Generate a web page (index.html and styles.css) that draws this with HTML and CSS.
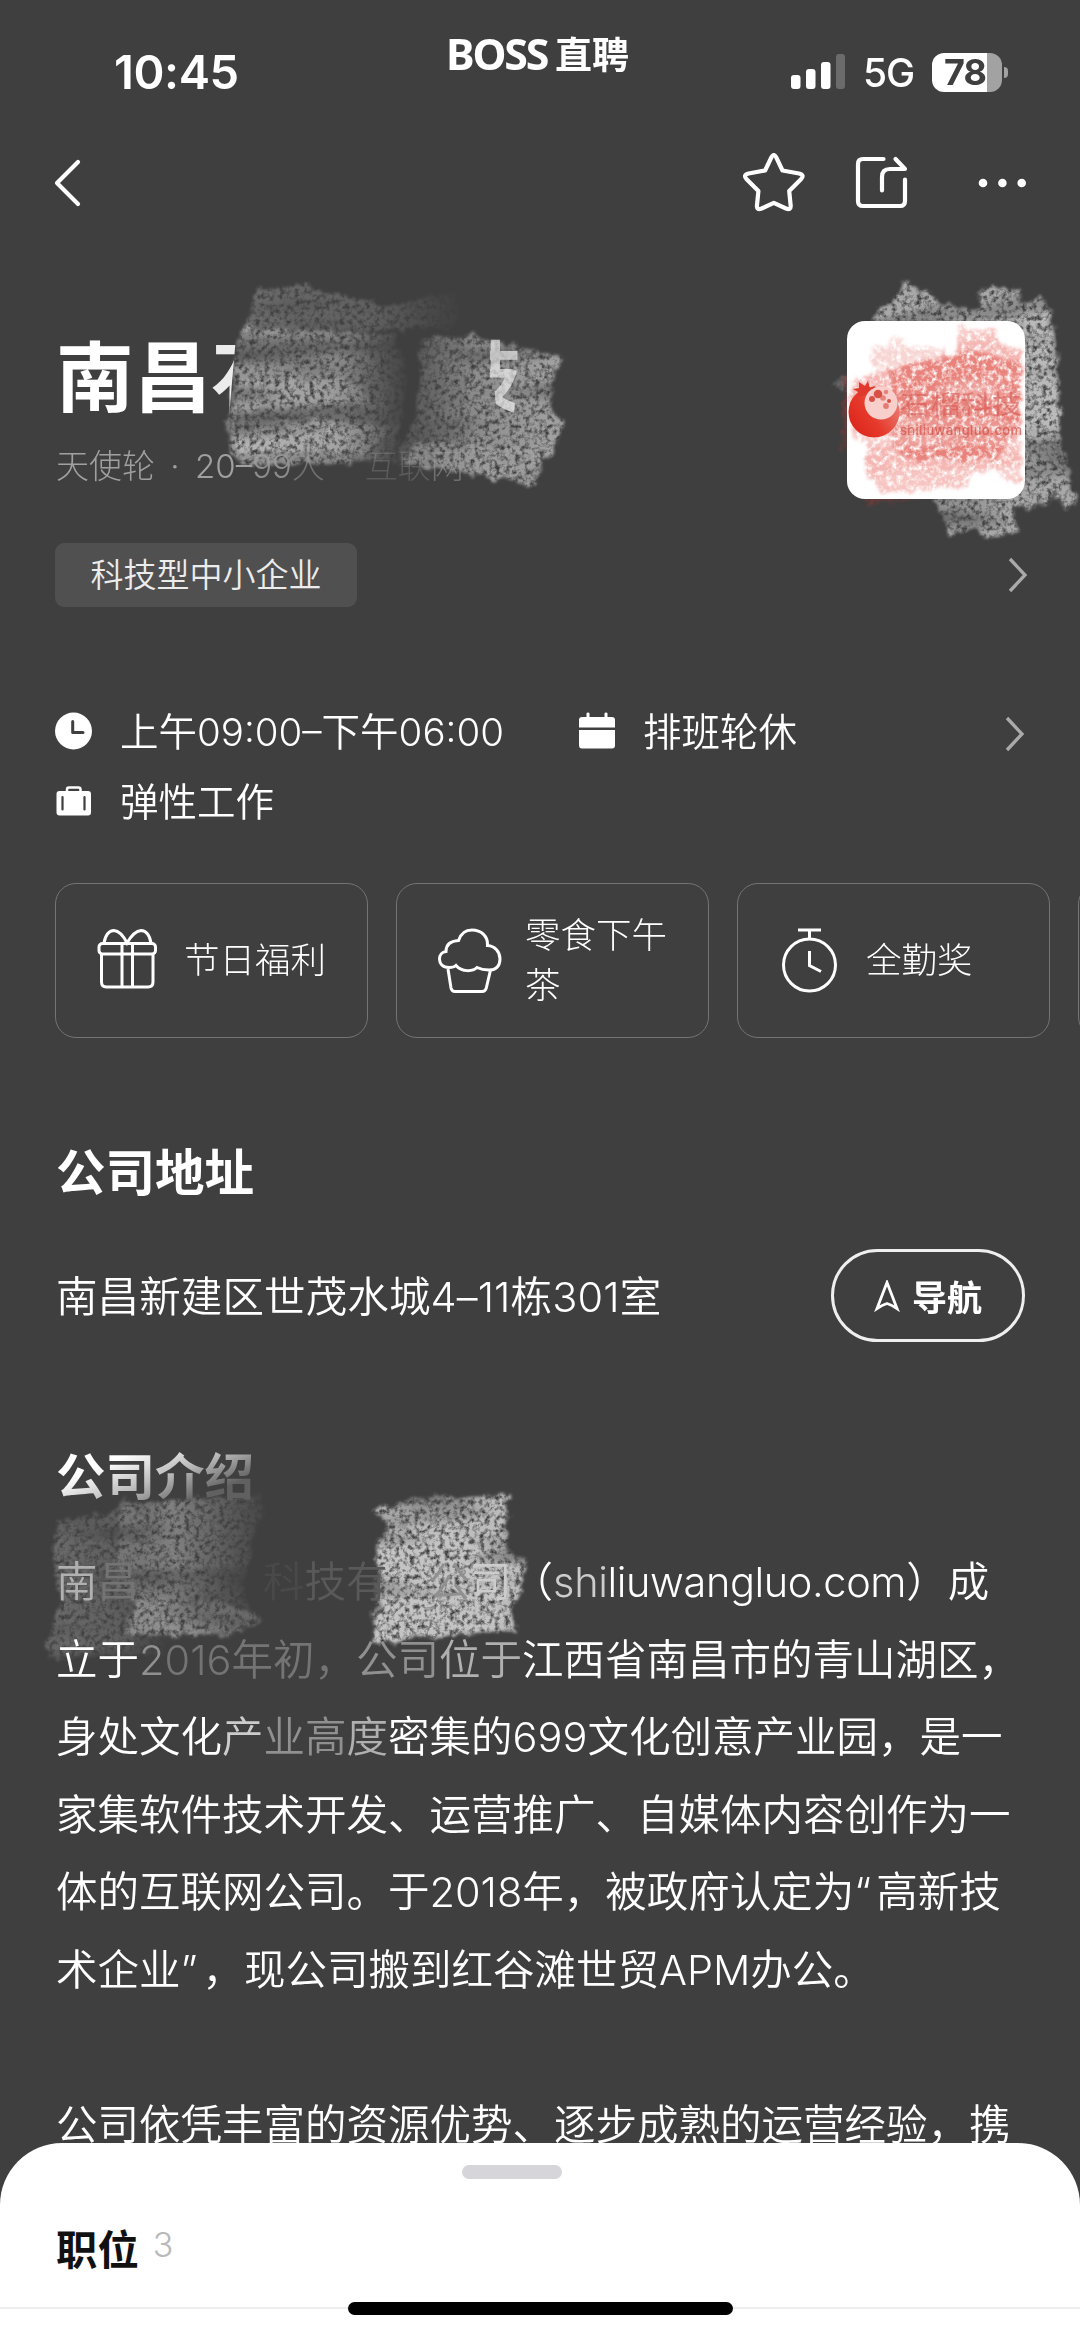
FILE: index.html
```html
<!DOCTYPE html>
<html lang="zh-CN">
<head>
<meta charset="utf-8">
<title>BOSS直聘 - 公司主页</title>
<link rel="stylesheet" href="styles.css">
</head>
<body>
<main class="screen">
  <svg class="smudges" width="1080" height="2337" viewBox="0 0 1080 2337" aria-hidden="true">
    <defs>
      <filter id="chalk" x="-5%" y="-5%" width="110%" height="110%" color-interpolation-filters="sRGB">
        <feTurbulence type="fractalNoise" baseFrequency="0.2" numOctaves="4" seed="4" result="n"/>
        <feColorMatrix in="n" type="matrix" values="0 0 0 0 1  0 0 0 0 1  0 0 0 0 1  2.6 0 0 0 -0.5" result="grain"/>
        <feTurbulence type="fractalNoise" baseFrequency="0.006 0.03" numOctaves="2" seed="9" result="wide"/>
        <feColorMatrix in="wide" type="matrix" values="0 0 0 0 1  0 0 0 0 1  0 0 0 0 1  2 0 0 0 0" result="bands"/>
        <feTurbulence type="fractalNoise" baseFrequency="0.09" numOctaves="3" seed="2" result="warp"/>
        <feDisplacementMap in="SourceGraphic" in2="warp" scale="13" xChannelSelector="R" yChannelSelector="G" result="edge"/>
        <feGaussianBlur in="edge" stdDeviation="1.4" result="soft"/>
        <feComposite in="soft" in2="grain" operator="in" result="a"/>
        <feComposite in="a" in2="bands" operator="in" result="b"/>
        <feGaussianBlur in="b" stdDeviation="0.6"/>
      </filter>
      <linearGradient id="fadeA" x1="0" x2="1"><stop offset="0" stop-color="#c4c4c4" stop-opacity=".9"/><stop offset=".65" stop-color="#b4b4b4" stop-opacity=".8"/><stop offset="1" stop-color="#888" stop-opacity=".1"/></linearGradient>
      <linearGradient id="fadeB" x1="0" x2="1"><stop offset="0" stop-color="#999" stop-opacity=".2"/><stop offset=".5" stop-color="#b4b4b4" stop-opacity=".8"/><stop offset="1" stop-color="#bbb" stop-opacity=".95"/></linearGradient>
      <linearGradient id="fadeC" x1="0" x2="1"><stop offset="0" stop-color="#999" stop-opacity=".5"/><stop offset=".6" stop-color="#999" stop-opacity=".35"/><stop offset="1" stop-color="#888" stop-opacity="0"/></linearGradient>
      <linearGradient id="fadeD" x1="0" x2="1"><stop offset="0" stop-color="#aaa" stop-opacity=".3"/><stop offset=".4" stop-color="#b0b0b0" stop-opacity=".65"/><stop offset="1" stop-color="#999" stop-opacity=".1"/></linearGradient>
    </defs>
    <g filter="url(#chalk)">
      <path fill="url(#fadeC)" d="M255 290 305 286 390 306 465 290 455 330 245 332Z"/>
      <path fill="url(#fadeA)" opacity=".75" d="M240 328 395 334 408 380 398 432 396 462 246 465 232 454 225 428 232 392 236 350Z"/>
      <path fill="url(#fadeA)" opacity=".8" d="M224 421 340 421 400 428 365 452 240 452Z"/>
      <path fill="#ddd" opacity=".7" d="M228 420 338 422 330 430 228 429Z"/>
      <path fill="url(#fadeA)" opacity=".6" d="M240 382 345 378 385 405 235 412Z"/>
      <path fill="url(#fadeB)" opacity=".85" d="M420 338 468 334 563 356 556 368 548 410 563 422 552 454 540 460 537 486 395 462 410 430 420 395Z"/>
      <path fill="#aaa" opacity=".5" d="M420 442 545 450 536 485 398 462Z"/>
    </g>
    <g filter="url(#chalk)">
      <path fill="url(#fadeC)" d="M56 1522 112 1512 125 1498 170 1550 170 1655 48 1658 46 1642 60 1606 54 1560Z"/>
      <path fill="url(#fadeD)" opacity=".9" d="M122 1505 262 1494 264 1508 250 1545 244 1598 262 1622 230 1636 125 1635 140 1608 114 1580 118 1540Z"/>
      <path fill="#b0b0b0" opacity=".4" d="M142 1600 235 1604 260 1622 225 1636 122 1635Z"/>
      <path fill="#c4c4c4" opacity=".95" d="M370 1510 398 1504 408 1498 510 1496 506 1552 526 1560 520 1598 510 1604 515 1630 370 1644 382 1604 376 1545 388 1525Z"/>
      <path fill="#ccc" opacity=".5" d="M380 1540 460 1530 500 1580 500 1628 372 1642Z"/>
    </g>
  </svg>

  <header class="status">
    <time class="clock">10:45</time>
    <div class="brand"><span class="brand-en">BOSS</span><span class="brand-cn">直聘</span></div>
    <div class="radio">
      <svg width="54" height="36" viewBox="0 0 54 36"><g fill="#fff"><rect y="21" width="9.5" height="14" rx="3"/><rect x="15" y="15" width="9.5" height="20" rx="3"/><rect x="30" y="8" width="9.5" height="27" rx="3"/><rect x="45" y="0" width="9" height="35" rx="3" fill="#6b6b6b"/></g></svg>
      <span class="net">5G</span>
      <div class="battery"><span>78</span></div>
    </div>
  </header>

  <nav class="nav">
    <svg class="back" width="32" height="50" viewBox="0 0 32 50"><path d="M26 4 5 25 26 46"/></svg>
    <div class="actions">
      <svg width="64" height="60" viewBox="0 0 64 60"><path d="M29.300 4.500 Q31.800 -.5 34.300 4.500 L40.500 17.500 57 20.500 Q62.800 21.800 59.200 26 L47.200 38 48.700 53 Q48.900 57.500 44 55.500 L31.800 49.800 19.600 55.500 Q14.700 57.500 14.900 53 L16.400 38 4.400 26 Q.8 21.800 6.600 20.500 L23.100 17.500Z"/></svg>
      <svg width="56" height="56" viewBox="0 0 56 56"><path d="M29.500 3H9Q4 3 4 8V45Q4 50 9 50H46Q51 50 51 45V23.500"/><path d="M28 34.500V21Q28 13 36 13H51L41.500 3"/></svg>
      <svg width="50" height="12" viewBox="0 0 50 12"><g class="dots"><circle cx="5" cy="6" r="4.300"/><circle cx="24.400" cy="6" r="4.300"/><circle cx="43.700" cy="6" r="4.300"/></g></svg>
    </div>
  </nav>

  <section class="company">
    <div>
      <h1 class="name">南昌<span class="cut-left">石</span><span class="blank"></span><span class="cut-right">技</span></h1>
      <p class="meta">天使轮<i>·</i>20–<span class="m1">99</span><span class="m2">人</span><i class="gone"></i><span class="m3">互联</span><span class="m2">网</span></p>
    </div>
    <svg class="logo" width="178" height="178" viewBox="0 0 178 178">
      <g filter="url(#chalk)">
        <path fill="#b4b4b4" opacity=".9" d="M58 -40 100 -16 130 -10 134 -35 172 -32 172 -20 196 -24 204 -10 210 30 214 110 228 184 216 188 206 170 202 184 166 188 170 212 134 214 128 206 102 214 85 170 25 10 30 -14 48 -20Z"/>
        <path fill="#ccc" opacity=".5" d="M174 -20 198 -24 214 118 176 120Z"/>
        <path fill="#888" opacity=".6" d="M-16 62 0 54 6 76Z"/>
        <path fill="#a33" opacity=".45" d="M-3 56H6V130H-6ZM18 176H90L20 184Z"/>
      </g>
      <rect width="178" height="178" rx="18" fill="#fff"/>
      <g filter="url(#chalk)">
        <path fill="#ec8780" opacity=".6" d="M4 58 60 42 110 32 112 6 150 10 152 24 174 26 174 160 160 162 150 150 125 154 120 166 40 173 18 158 20 120 4 118Z"/>
        <path fill="#e2675e" opacity=".65" d="M42 48 130 30 174 42 174 100 150 138 60 140 45 120Z"/>
        <path fill="#eb9690" opacity=".4" d="M22 26 40 24 46 16 54 16 60 26 98 28 100 38 28 48Z"/>
      </g>
      <defs><linearGradient id="fruit" x1="0" y1="1" x2="1" y2=".3"><stop offset="0" stop-color="#d91f17"/><stop offset=".5" stop-color="#e63a2c"/><stop offset="1" stop-color="#e98078"/></linearGradient></defs>
      <circle cx="27" cy="91" r="25.500" fill="url(#fruit)"/>
      <path d="M10 76 11 71 6 68 12 67 12 61 18 65 21 60 23 67 28 65 25 73Z" fill="#e0392d"/>
      <circle cx="34" cy="82" r="16.500" fill="#f8cfcb"/>
      <g fill="#d95047"><circle cx="31" cy="73" r="4.300"/><circle cx="39" cy="71" r="2.300" opacity=".6"/><circle cx="25" cy="78" r="3"/><circle cx="36" cy="77" r="2.800" opacity=".6"/><circle cx="42" cy="80" r="2"/><circle cx="39" cy="85" r="2.900" opacity=".65"/></g>
      <text class="logo-cn" x="53" y="93" textLength="122" lengthAdjust="spacingAndGlyphs">石榴科技</text>
      <text class="logo-url" x="53" y="114" textLength="122">shiliuwangluo.com</text>
    </svg>
  </section>

  <div class="tag-row">
    <span class="tag">科技型中小企业</span>
    <svg class="arrow" width="22" height="40" viewBox="0 0 22 40"><path d="M3 4 18 20 3 36"/></svg>
  </div>

  <section class="schedule">
    <ul class="hours">
      <li><svg width="38" height="38" viewBox="0 0 38 38"><circle cx="18.500" cy="19" r="18.500" fill="#fff"/><path d="M17.700 9.500V20.500H28" fill="none" stroke="#3f3f3f" stroke-width="3" stroke-linecap="round" stroke-linejoin="round"/></svg><span>上午09:00–下午06:00</span></li>
      <li><svg width="38" height="38" viewBox="0 0 38 38"><path fill="#fff" d="M1 15.500V8Q1 5 4 5H8.500V1.500Q8.500 .5 10 .5T11.500 1.500V5H26.500V1.500Q26.500 .5 28 .5T29.500 1.500V5H34Q37 5 37 8V15.500ZM1 18H37V33.500Q37 36.500 34 36.500H4Q1 36.500 1 33.500Z"/></svg><span>排班轮休</span></li>
      <li><svg width="38" height="38" viewBox="0 0 38 38"><rect x="1.500" y="9" width="34.500" height="24.500" rx="3" fill="#fff"/><path d="M12 10V7.500Q12 5.500 14 5.500H23.500Q25.500 5.500 25.500 7.500V10" fill="none" stroke="#fff" stroke-width="2.500"/><path d="M7.500 15V27.500M29.500 15V27.500" stroke="#3f3f3f" stroke-width="2.200" stroke-linecap="round"/></svg><span>弹性工作</span></li>
    </ul>
    <svg class="arrow" width="22" height="40" viewBox="0 0 22 40"><path d="M3 4 18 20 3 36"/></svg>
  </section>

  <ul class="benefits">
    <li><svg width="64" height="66" viewBox="0 0 64 66"><rect x="2" y="15.500" width="56.500" height="10.500" rx="3.500"/><path d="M4.500 26V54Q4.500 59 9.500 59H51Q56 59 56 54V26M25 16V59M35.500 16V59M7 15Q9 3 17 2.500 24 3 30 15 37 3 44 2.500 52 3 54 15"/></svg><span>节日福利</span></li>
    <li><svg width="64" height="66" viewBox="0 0 64 66"><path d="M11 39.500C4 39.500 1.500 35 1.500 31 1.500 27 4 24 8 23.500 8 16 13 13 20.500 12.500 23 5 28 2 34 2 43 2 50 8 49.500 17.500 57 18 62 24 62 31 62 39 57 42 51 42 45 42 42 41 39 39.500 35 43.500 24 44.500 18 37.500 16 39.500 14 39.500 11 39.500ZM10 41 13 60Q13.700 63.500 17 63.500H44Q47.500 63.500 48.300 60L52.500 42"/></svg><span>零食下午茶</span></li>
    <li><svg width="64" height="66" viewBox="0 0 64 66"><circle cx="30.500" cy="37" r="26"/><path d="M19 2H42M30.500 2V11M30.500 23V37.500L42 43.500"/></svg><span>全勤奖</span></li>
    <li></li>
  </ul>

  <h2>公司地址</h2>
  <div class="address">
    <p>南昌新建区世茂水城4–11栋301室</p>
    <button class="go"><svg width="26" height="32" viewBox="0 0 26 32"><path d="M13 2.500 23 28.500Q18 25 13 23.500 8 25 3 28.500Z"/></svg>导航</button>
  </div>

  <h2 class="faded">公司介绍</h2>
  <article class="intro">
    <p><span class="f1">南</span><span class="f3">昌</span><span class="hidden-3"></span><span class="f5">科</span><span class="f4">技有</span><span class="hidden-1"></span><span class="f2">公</span><span class="f0">司</span>（<span class="url"><span class="f0">shi</span>liuwangluo.com</span>）成</p>
    <p>立于<span class="f2">2</span><span class="f3">016年初，</span><span class="f2">公</span><span class="f2">司</span><span class="f1">位于</span>江西省南昌市的青山湖区，</p>
    <p>身处文化<span class="f0">产</span><span class="f2">业高</span><span class="f1">度</span>密集的699文化创意产业园，是一</p>
    <p>家集软件技术开发、运营推广、自媒体内容创作为一</p>
    <p>体的互联网公司。于2018年，被政府认定为<span class="quote">“</span>高新技</p>
    <p>术企业<span class="quote">”</span>，现公司搬到红谷滩世贸APM办公。</p>
    <p class="next">公司依凭丰富的资源优势、逐步成熟的运营经验，携</p>
  </article>

  <aside class="sheet">
    <span class="grip"></span>
    <div class="jobs"><strong>职位</strong><sup>3</sup></div>
    <div class="home-line"><span class="home"></span></div>
  </aside>
</main>
</body>
</html>
```
FILE: styles.css
```css
* { box-sizing: border-box; margin: 0; padding: 0; }
body { width: 1080px; background: #3f3f3f; }
ul { list-style: none; }
i { font-style: normal; }

.screen {
  position: relative;
  width: 1080px;
  height: 2337px;
  overflow: hidden;
  background: #3f3f3f;
  color: #fff;
  font-family: Inter, "Noto Sans CJK SC", sans-serif;
  isolation: isolate;
}
.smudges { position: absolute; top: 0; left: 0; z-index: -1; }

.status { display: grid; grid-template-columns: 446px 1fr auto; height: 120px; padding-right: 78px; }
.clock { padding: 42px 0 0 114px; font-size: 47px; line-height: 60px; font-weight: 600; letter-spacing: -0.400px; }
.brand { display: flex; align-items: center; gap: 9px; height: 60px; margin-top: 23px; font-weight: 700; }
.brand-en { width: 100px; font-family: "Noto Sans", sans-serif; font-size: 43px; letter-spacing: -2.200px; }
.brand-cn { font-family: "Noto Sans CJK SC", sans-serif; font-size: 37px; }
.radio { display: flex; align-items: center; height: 60px; margin-top: 42px; }
.net { width: 69px; margin-left: 18px; font-size: 39px; font-weight: 500; letter-spacing: -1px; }
.battery {
  position: relative;
  width: 70px;
  height: 39px;
  border-radius: 12px;
  background: linear-gradient(90deg, #fff 55px, #a2a2a2 55px);
  color: #3f3f3f;
  font-size: 36px;
  line-height: 39px;
  font-weight: 700;
  letter-spacing: -1px;
  padding-left: 12px;
}
.battery::after { content: ""; position: absolute; left: 72px; top: 14px; width: 4px; height: 11px; border-radius: 0 5px 5px 0; background: #a2a2a2; }

.nav { display: flex; align-items: center; justify-content: space-between; height: 125px; padding: 0 56px 0 52px; }
.nav svg { fill: none; stroke: #fff; stroke-width: 4.200; stroke-linecap: round; stroke-linejoin: round; }
.actions { display: flex; align-items: center; }
.actions svg:nth-child(2) { margin: 2px 0 0 48px; }
.actions svg:nth-child(3) { margin: 1px -4px 0 68px; }
.nav .dots { fill: #fff; stroke: none; }

.company { display: flex; justify-content: space-between; height: 178px; margin-top: 76px; padding: 0 55px 0 56px; }
.name { display: flex; font-size: 77.700px; line-height: 114px; font-weight: 700; }
.cut-left { clip-path: polygon(0 0, 26px 0, 16px 100%, 0 100%); opacity: .9; }
.blank { width: 155px; }
.cut-right { clip-path: polygon(46px 0, 74px 0, 74px 48px, 68px 100%, 54px 100%, 50px 62px, 46px 60px); opacity: .6; }
.meta { display: flex; color: #a0a0a0; font-size: 33px; line-height: 62px; font-weight: 300; }
.meta i { width: 40px; text-align: center; }
.meta .gone { width: 40px; }
.m1 { opacity: .8; }
.m2 { opacity: .5; }
.m3 { opacity: .28; }
.logo { overflow: visible; }
.logo-cn { font: 400 26px "Noto Sans CJK SC", sans-serif; fill: #d2544c; opacity: .5; }
.logo-url { font: 500 13px Inter, sans-serif; fill: #cf4a42; opacity: .65; }

.tag-row { display: flex; align-items: center; justify-content: space-between; margin-top: 44px; padding: 0 51px 0 55px; }
.tag { width: 302px; height: 64px; border-radius: 9px; background: #505050; color: #ececec; font-size: 33px; line-height: 64px; text-align: center; font-weight: 350; }
.arrow { fill: none; stroke: #aaa; stroke-width: 3.300; }

.schedule { display: flex; justify-content: space-between; margin-top: 89px; padding: 0 54px 0 55px; font-size: 38.500px; font-weight: 350; }
.schedule .arrow { margin-top: 18px; }
.hours { display: grid; grid-template-columns: 523px auto; }
.hours li { display: flex; align-items: center; gap: 27px; height: 70px; white-space: nowrap; }
.hours span { margin-top: -5px; }

.benefits { display: flex; gap: 28px; margin-top: 47px; padding-left: 55px; }
.benefits li {
  flex: 0 0 313px;
  display: flex;
  align-items: center;
  gap: 23px;
  height: 155px;
  padding: 0 20px 0 41px;
  border: 1.500px solid #747474;
  border-radius: 21px;
  font-size: 35.500px;
  line-height: 50px;
  font-weight: 300;
}
.benefits svg { flex: none; fill: none; stroke: #fff; stroke-width: 3; }
.benefits span { flex: 1; }

h2 { margin: 100px 0 0 56px; font-size: 49.500px; line-height: 70px; font-weight: 600; }
.faded { width: max-content; background: linear-gradient(158deg, #fff 28%, #bbb 52%, #606060 76%); -webkit-background-clip: text; background-clip: text; color: transparent; }
.address { display: flex; align-items: center; justify-content: space-between; margin-top: 41px; padding: 0 55px 0 56px; font-size: 41.500px; }
.address p { margin-top: -4px; font-weight: 350; letter-spacing: 0.120px; }
.go {
  display: flex;
  align-items: center;
  justify-content: center;
  gap: 12px;
  width: 194px;
  height: 93px;
  border: 3px solid #efefef;
  border-radius: 47px;
  background: none;
  color: #fff;
  font: 600 35px Inter, "Noto Sans CJK SC", sans-serif;
}
.go svg { fill: none; stroke: #fff; stroke-width: 2.800; }

.intro { margin: 32px 0 0 56px; font-size: 41.500px; line-height: 77.550px; font-weight: 350; white-space: nowrap; }
.intro .next { margin-top: 77.550px; }
.url { letter-spacing: -0.400px; }
.quote { margin-right: 5px; }
.f0 { color: #ccc; }
.f1 { color: #b0b0b0; }
.f2 { color: #909090; }
.f3 { color: #747474; }
.f4 { color: #595959; }
.f5 { color: #494949; }
.hidden-3 { display: inline-block; width: 124px; }
.hidden-1 { display: inline-block; width: 41px; }

.sheet { position: absolute; left: 0; right: 0; bottom: 0; height: 194px; border-radius: 62px 62px 0 0; background: #fff; color: #111; }
.grip { display: block; width: 100px; height: 14px; margin: 22px 0 0 462px; border-radius: 7px; background: #d6d5da; }
.jobs { display: flex; height: 60px; margin: 41px 0 0 56px; gap: 14px; line-height: 60px; }
.jobs strong { font-size: 41.400px; font-weight: 600; }
.jobs sup { color: #b9b9b9; font-size: 34px; line-height: 50px; font-weight: 300; }
.home-line { display: flex; align-items: center; justify-content: center; height: 14px; margin-top: 21px; background: linear-gradient(#eee, #eee) center / 100% 2px no-repeat; }
.home { width: 385px; height: 13px; border-radius: 7px; background: #000; }
```
